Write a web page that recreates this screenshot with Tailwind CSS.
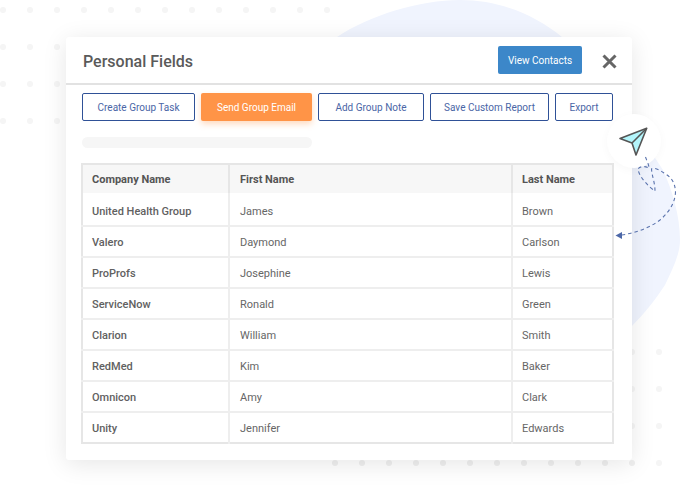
<!DOCTYPE html>
<html lang="en">

<head>
  <meta charset="UTF-8" />
  <script src="https://cdn.jsdelivr.net/npm/@tailwindcss/browser@4"></script>
  <title>Personal Fields</title>
</head>

<body class="bg-white">
  <div class="relative w-[688px] h-[492px] overflow-hidden bg-white font-['Roboto',sans-serif]">
    <!-- background blob and dots -->
    <svg class="absolute left-0 top-0" width="688" height="492">
      <path d="M337 37C370 15 420 0 460 0 500 0 535 15 562 37 600 70 640 135 663 170 672 190 680 215 680 240 680 255 672 270 665 285 655 300 645 313 632 326L400 326Z" fill="#f0f4fe" />
      <g fill="#f5f5f5">
        <circle cx="3" cy="10" r="3" /><circle cx="30" cy="10" r="3" /><circle cx="57" cy="10" r="3" /><circle cx="84" cy="10" r="3" />
        <circle cx="111" cy="10" r="3" /><circle cx="138" cy="10" r="3" /><circle cx="165" cy="10" r="3" /><circle cx="192" cy="10" r="3" />
        <circle cx="219" cy="10" r="3" /><circle cx="246" cy="10" r="3" /><circle cx="273" cy="10" r="3" /><circle cx="300" cy="10" r="3" />
        <circle cx="327" cy="10" r="3" />
        <circle cx="3" cy="47" r="3" /><circle cx="30" cy="47" r="3" /><circle cx="57" cy="47" r="3" />
        <circle cx="3" cy="84" r="3" /><circle cx="30" cy="84" r="3" /><circle cx="57" cy="84" r="3" />
        <circle cx="3" cy="121" r="3" /><circle cx="30" cy="121" r="3" /><circle cx="57" cy="121" r="3" />
        <circle cx="659" cy="352" r="3" /><circle cx="659" cy="389" r="3" /><circle cx="659" cy="426" r="3" /><circle cx="659" cy="463" r="3" />
        <circle cx="632" cy="352" r="3" /><circle cx="632" cy="389" r="3" /><circle cx="632" cy="426" r="3" />
      </g>
      <g fill="#f0f0f0">
        <circle cx="335" cy="463" r="3" /><circle cx="362" cy="463" r="3" /><circle cx="389" cy="463" r="3" />
        <circle cx="416" cy="463" r="3" /><circle cx="443" cy="463" r="3" /><circle cx="470" cy="463" r="3" />
        <circle cx="497" cy="463" r="3" /><circle cx="524" cy="463" r="3" /><circle cx="551" cy="463" r="3" />
        <circle cx="578" cy="463" r="3" /><circle cx="605" cy="463" r="3" /><circle cx="632" cy="463" r="3" />
      </g>
    </svg>

    <!-- card -->
    <div class="absolute left-[66px] top-[37px] w-[566px] h-[423px] bg-white rounded-[3px] shadow-[0_4px_24px_rgba(0,0,0,0.10)]">
      <div class="flex items-center justify-between h-[48px] border-b-2 border-[#e2e2e2] pl-[17px] pr-[15px]">
        <h1 class="mt-[3px] text-[16px] font-medium text-[#5a5a5a]">Personal Fields</h1>
        <div class="flex items-center gap-[20px]">
          <button class="w-[84px] h-[28px] rounded-[2px] bg-[#3c87c9] text-white text-[10px]">View Contacts</button>
          <svg width="15" height="15" viewBox="0 0 15 15" class="mt-[3px]"><path d="M1.5 1.5 13.5 13.5M13.5 1.5 1.5 13.5" stroke="#666" stroke-width="3" /></svg>
        </div>
      </div>

      <div class="px-[16px]">
        <div class="flex gap-[6px] mt-[8px] text-[10px] text-[#4a66a6]">
          <button class="w-[113px] h-[28px] rounded-[2px] border border-[#2f5197]">Create Group Task</button>
          <button class="w-[111px] h-[28px] rounded-[2px] bg-[#ff9447] text-white shadow-[0_3px_6px_rgba(255,148,71,0.35)]">Send Group Email</button>
          <button class="w-[106px] h-[28px] rounded-[2px] border border-[#2f5197]">Add Group Note</button>
          <button class="w-[119px] h-[28px] rounded-[2px] border border-[#2f5197]">Save Custom Report</button>
          <button class="w-[58px] h-[28px] rounded-[2px] border border-[#2f5197]">Export</button>
        </div>

        <div class="w-[230px] h-[11px] rounded-full bg-[#f6f6f6] mt-[16px]"></div>

        <table class="mt-[15px] -ml-[1px] w-[531px] table-fixed border-collapse border-2 border-[#e6e6e6] text-[11px] text-[#666]">
          <colgroup>
            <col class="w-[147px]" />
            <col class="w-[283px]" />
            <col class="w-[101px]" />
          </colgroup>
          <thead>
            <tr class="h-[29px] bg-[#f7f7f7] text-left text-[#555]">
              <th class="pl-[9px] pt-[2px] font-bold border-r-2 border-[#e6e6e6]">Company Name</th>
              <th class="pl-[10px] pt-[2px] font-bold border-r-2 border-[#e6e6e6]">First Name</th>
              <th class="pl-[9px] pt-[2px] font-bold">Last Name</th>
            </tr>
          </thead>
          <tbody class="[&_td]:pt-[4px]">
            <tr class="h-[33px] border-b-2 border-[#eeeeee] [&_td]:pt-[6px]"><td class="pl-[9px] font-medium text-[#616161] border-r-2 border-[#eeeeee]">United Health Group</td><td class="pl-[10px] border-r-2 border-[#eeeeee]">James</td><td class="pl-[9px]">Brown</td></tr>
            <tr class="h-[31px] border-b-2 border-[#eeeeee]"><td class="pl-[9px] font-medium text-[#616161] border-r-2 border-[#eeeeee]">Valero</td><td class="pl-[10px] border-r-2 border-[#eeeeee]">Daymond</td><td class="pl-[9px]">Carlson</td></tr>
            <tr class="h-[31px] border-b-2 border-[#eeeeee]"><td class="pl-[9px] font-medium text-[#616161] border-r-2 border-[#eeeeee]">ProProfs</td><td class="pl-[10px] border-r-2 border-[#eeeeee]">Josephine</td><td class="pl-[9px]">Lewis</td></tr>
            <tr class="h-[31px] border-b-2 border-[#eeeeee]"><td class="pl-[9px] font-medium text-[#616161] border-r-2 border-[#eeeeee]">ServiceNow</td><td class="pl-[10px] border-r-2 border-[#eeeeee]">Ronald</td><td class="pl-[9px]">Green</td></tr>
            <tr class="h-[31px] border-b-2 border-[#eeeeee]"><td class="pl-[9px] font-medium text-[#616161] border-r-2 border-[#eeeeee]">Clarion</td><td class="pl-[10px] border-r-2 border-[#eeeeee]">William</td><td class="pl-[9px]">Smith</td></tr>
            <tr class="h-[31px] border-b-2 border-[#eeeeee]"><td class="pl-[9px] font-medium text-[#616161] border-r-2 border-[#eeeeee]">RedMed</td><td class="pl-[10px] border-r-2 border-[#eeeeee]">Kim</td><td class="pl-[9px]">Baker</td></tr>
            <tr class="h-[31px] border-b-2 border-[#eeeeee]"><td class="pl-[9px] font-medium text-[#616161] border-r-2 border-[#eeeeee]">Omnicon</td><td class="pl-[10px] border-r-2 border-[#eeeeee]">Amy</td><td class="pl-[9px]">Clark</td></tr>
            <tr class="h-[31px]"><td class="pl-[9px] font-medium text-[#616161] border-r-2 border-[#eeeeee]">Unity</td><td class="pl-[10px] border-r-2 border-[#eeeeee]">Jennifer</td><td class="pl-[9px]">Edwards</td></tr>
          </tbody>
        </table>
      </div>
    </div>

    <!-- paper plane badge and dashed arrow -->
    <div class="absolute left-[607px] top-[114px] w-[54px] h-[54px] rounded-full bg-white shadow-[0_2px_10px_rgba(0,0,0,0.03)]"></div>
    <svg class="absolute left-0 top-0" width="688" height="492" fill="none">
      <path d="M646.7 128.3 620 138.5 632 143 636 155Z" fill="#b3f5fb" stroke="#555" stroke-width="1.6" stroke-linejoin="round" />
      <path d="M646.7 128.3 632 143" stroke="#555" stroke-width="1.6" />
      <path d="M645.5 157C647 161 649 165 649 168 645 166 640 166 638 169 639 177 649 187 655 191 655 183 652 176 651.5 169 654 167 660 170 664 173 671 177 675 182 675.5 192 675 204 668 213 660 220 648 229 634 233 622 235" stroke="#5a73ad" stroke-width="1.1" stroke-dasharray="3.5 3" />
      <path d="M615.5 235.5 622 232 622 239Z" fill="#4d68a8" />
    </svg>
  </div>
</body>

</html>
